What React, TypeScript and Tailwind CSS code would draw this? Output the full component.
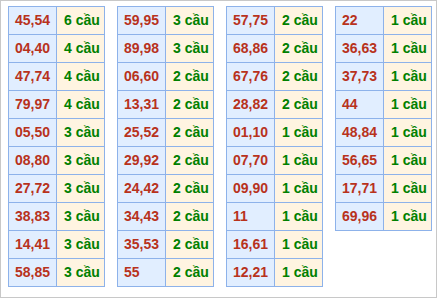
import React from "react";

const data: [string, string][][] = [
  [["45,54","6 cầu"],["04,40","4 cầu"],["47,74","4 cầu"],["79,97","4 cầu"],["05,50","3 cầu"],["08,80","3 cầu"],["27,72","3 cầu"],["38,83","3 cầu"],["14,41","3 cầu"],["58,85","3 cầu"]],
  [["59,95","3 cầu"],["89,98","3 cầu"],["06,60","2 cầu"],["13,31","2 cầu"],["25,52","2 cầu"],["29,92","2 cầu"],["24,42","2 cầu"],["34,43","2 cầu"],["35,53","2 cầu"],["55","2 cầu"]],
  [["57,75","2 cầu"],["68,86","2 cầu"],["67,76","2 cầu"],["28,82","2 cầu"],["01,10","1 cầu"],["07,70","1 cầu"],["09,90","1 cầu"],["11","1 cầu"],["16,61","1 cầu"],["12,21","1 cầu"]],
  [["22","1 cầu"],["36,63","1 cầu"],["37,73","1 cầu"],["44","1 cầu"],["48,84","1 cầu"],["56,65","1 cầu"],["17,71","1 cầu"],["69,96","1 cầu"]],
];

export default function App() {
  return (
    <div className="w-[438px] h-[299px] bg-white">
      <div
        className="w-[437px] h-[298px] border border-[#c8c8c8] bg-white flex items-start gap-[12px] pl-[7px] pt-[5px]"
        style={{ fontFamily: '"Liberation Sans", Arial, sans-serif' }}
      >
        {data.map((col, i) => (
          <div key={i} className="w-[97px] border-t border-l border-[#8db2ea]">
            {col.map(([n, c], j) => (
              <div key={j} className="flex h-[28px] border-b border-[#8db2ea]">
                <div className="w-[48px] border-r border-[#8db2ea] bg-[#e1eeff] flex items-center pl-[6px] text-[14px] font-bold text-[#b8321c]">
                  {n}
                </div>
                <div className="flex-1 border-r border-[#8db2ea] bg-[#fff4e1] flex items-center pl-[7px] text-[14px] font-bold text-[#008000]">
                  {c}
                </div>
              </div>
            ))}
          </div>
        ))}
      </div>
    </div>
  );
}
